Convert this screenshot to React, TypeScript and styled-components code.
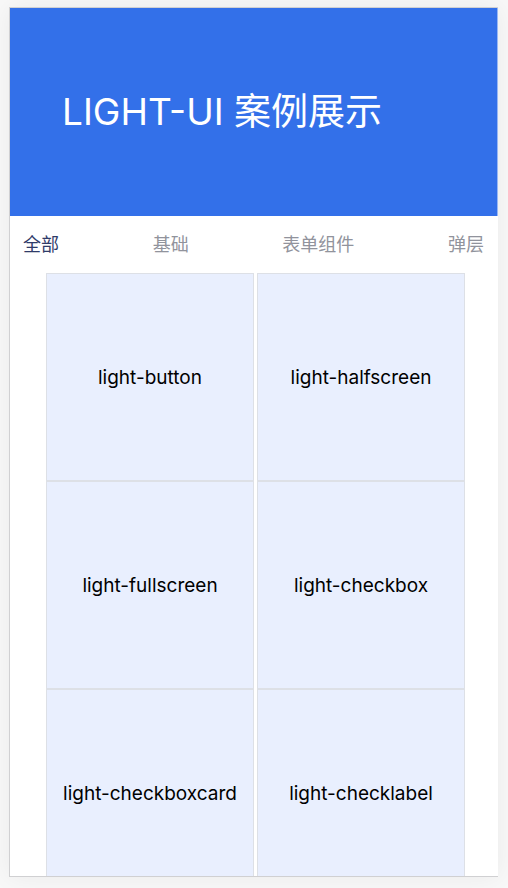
import React, { useState } from "react";
import styled, { createGlobalStyle } from "styled-components";

const GlobalStyle = createGlobalStyle`
  * {
    box-sizing: border-box;
  }
  body {
    margin: 0;
    background: #f8f8f8;
    font-family: Inter, "Noto Sans CJK SC", sans-serif;
  }
`;

const Page = styled.div`
  height: 100vh;
  padding: 7px 10px 11px 9px;
`;

const Frame = styled.main`
  height: 100%;
  overflow: hidden;
  background: #ffffff;
  border: 1px solid #d0d0d2;
  border-right: 0;
  box-shadow: 0 0 24px rgba(0, 0, 0, 0.06);
`;

const Banner = styled.header`
  display: flex;
  align-items: center;
  height: 208px;
  padding: 0 52px;
  border-right: 1px solid #99b7f4;
  background: #3370e9;
`;

const Title = styled.h1`
  margin: 0;
  color: #ffffff;
  font-size: 37px;
  font-weight: 400;
  line-height: 48px;
`;

const Tabs = styled.nav`
  display: flex;
  justify-content: space-between;
  align-items: center;
  height: 57px;
  padding: 0 14px 0 13px;
`;

const Tab = styled.button<{ $active: boolean }>`
  padding: 0;
  border: 0;
  background: none;
  color: ${(p) => (p.$active ? "#2f3b69" : "#91939c")};
  font-family: inherit;
  font-size: 18px;
  line-height: 24px;
  cursor: pointer;
`;

const Grid = styled.div`
  display: grid;
  grid-template-columns: 1fr 1fr;
  column-gap: 3px;
  padding: 0 33px 0 36px;
`;

const Card = styled.a`
  display: flex;
  align-items: center;
  justify-content: center;
  aspect-ratio: 1;
  padding-top: 2px;
  border: 1px solid #dde0e6;
  background: #e9effe;
  color: #000000;
  font-size: 19px;
  line-height: 24px;
  text-decoration: none;
`;

const tabs = ["全部", "基础", "表单组件", "弹层"];

const components = [
  "light-button",
  "light-halfscreen",
  "light-fullscreen",
  "light-checkbox",
  "light-checkboxcard",
  "light-checklabel",
];

export default function App() {
  const [active, setActive] = useState(tabs[0]);

  return (
    <Page>
      <GlobalStyle />
      <Frame>
        <Banner>
          <Title>LIGHT-UI 案例展示</Title>
        </Banner>
        <Tabs>
          {tabs.map((tab) => (
            <Tab
              key={tab}
              type="button"
              $active={tab === active}
              aria-pressed={tab === active}
              onClick={() => setActive(tab)}
            >
              {tab}
            </Tab>
          ))}
        </Tabs>
        <Grid>
          {components.map((name) => (
            <Card key={name} href={`#${name}`}>
              {name}
            </Card>
          ))}
        </Grid>
      </Frame>
    </Page>
  );
}
